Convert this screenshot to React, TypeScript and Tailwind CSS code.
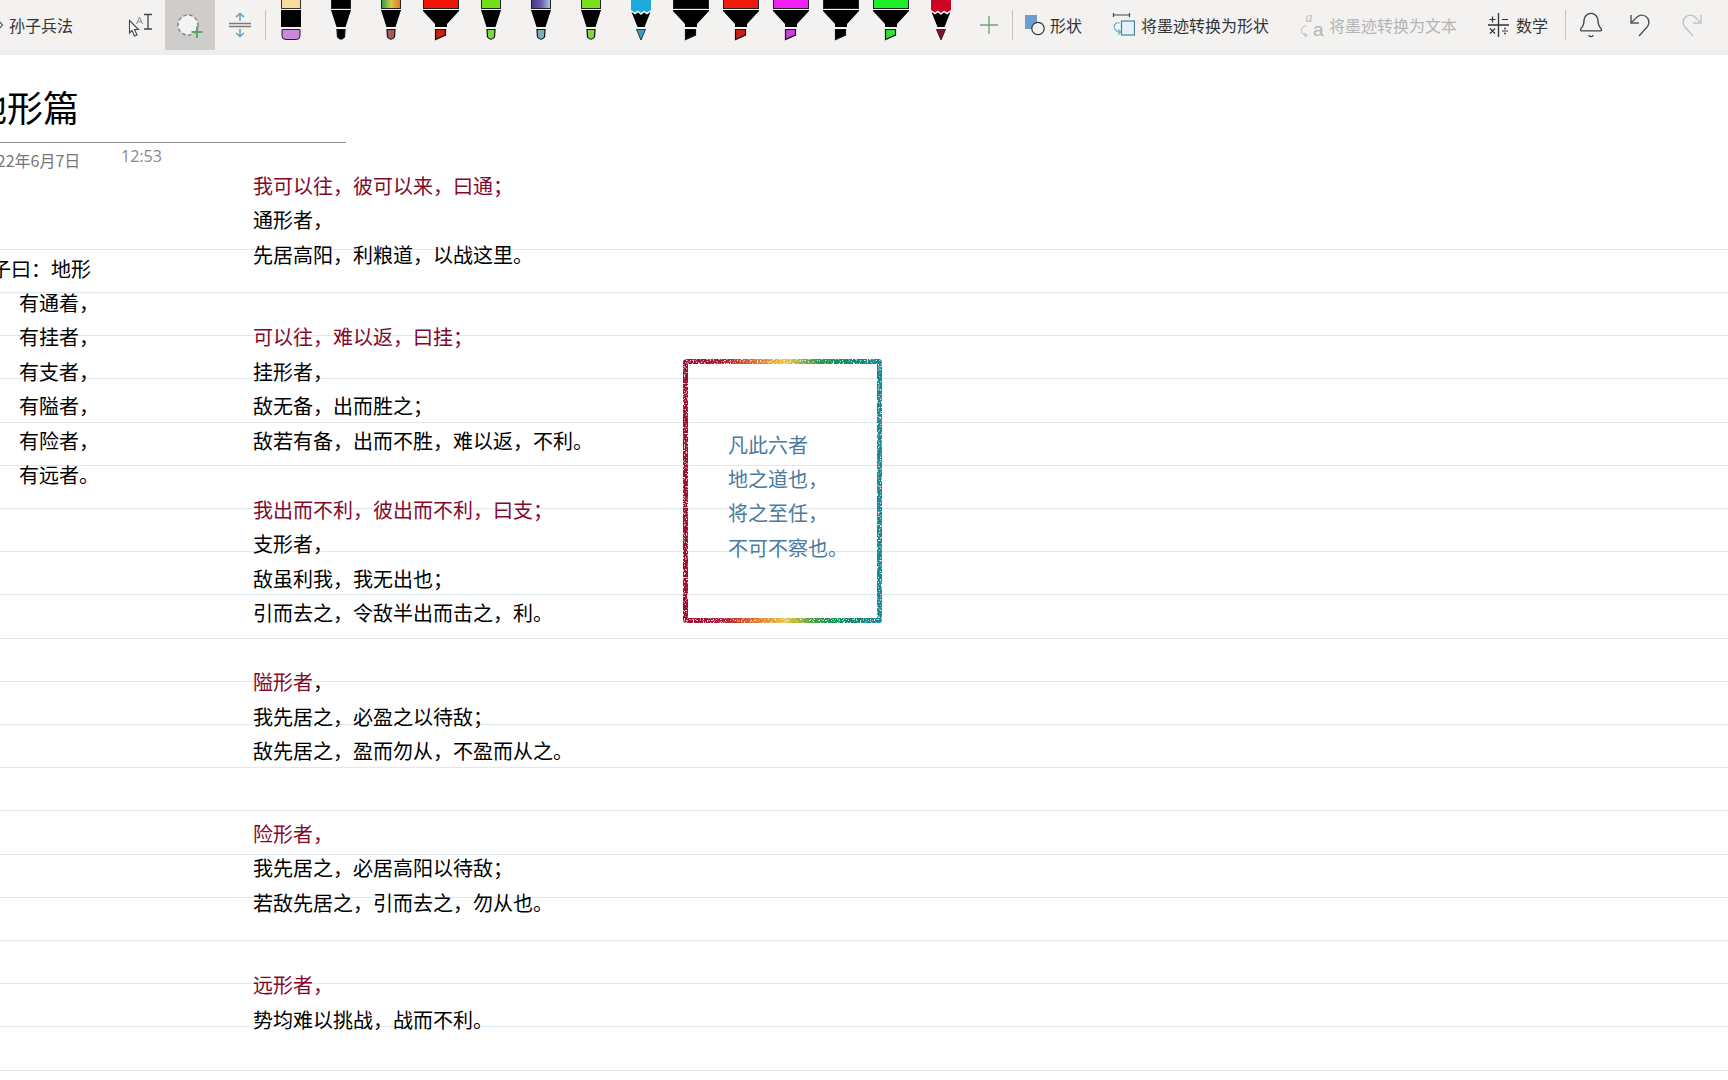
import { Bell } from "lucide-react";

type PenKind = "fine" | "chisel" | "pencil";

interface IPen {
  kind: PenKind;
  body: string;
  tip: string;
  edge?: string;
}

const pens: IPen[] = [
  { kind: "fine", body: "#000", tip: "#000" },
  { kind: "fine", body: "url(#rainbowPen)", tip: "#a45a5a" },
  { kind: "chisel", body: "#f01408", tip: "#c8200f" },
  { kind: "fine", body: "#6fe019", tip: "#7fd83a" },
  { kind: "fine", body: "url(#galaxyPen)", tip: "#7fb0ba" },
  { kind: "fine", body: "#7be01c", tip: "#86d24a" },
  { kind: "pencil", body: "#1caad9", tip: "#3a9cc0" },
  { kind: "chisel", body: "#000", tip: "#000" },
  { kind: "chisel", body: "#ee1a0c", tip: "#cc2018" },
  { kind: "chisel", body: "#f020f4", tip: "#cc40dc" },
  { kind: "chisel", body: "#000", tip: "#000" },
  { kind: "chisel", body: "#20ee28", tip: "#30e038" },
  { kind: "pencil", body: "#cc0426", tip: "#8a0a30" },
];

function Pen({ kind, body, tip }: IPen) {
  return (
    <svg viewBox="0 0 50 50" className="w-[50px] h-[50px] shrink-0">
      {kind === "fine" && (
        <>
          <rect x="15.5" y="-2" width="19" height="10.5" fill={body} stroke="#222" />
          <path d="M15 10 H35 L29.5 27 H20.5 Z" fill="#000" />
          <path d="M21 29.5 H29 L28.5 37 Q25 41.5 21.5 37 Z" fill={tip} stroke="#111" strokeWidth="1.2" />
        </>
      )}
      {kind === "chisel" && (
        <>
          <rect x="7.5" y="-2" width="35" height="10.5" fill={body} stroke="#222" />
          <path d="M7 10 H43 V11 L31 24 V27 H19 V24 L7 11 Z" fill="#000" />
          <path d="M19.5 29.5 H29.5 V35 L19.5 39.5 Z" fill={tip} stroke="#111" strokeWidth="1.2" />
        </>
      )}
      {kind === "pencil" && (
        <>
          <path d="M15 -2 H35 V10 L31 12.5 L28 10.5 L25 13 L22 10.5 L19 12.5 L15 10 Z" fill={body} />
          <path d="M15.5 12 L19 14.5 L22 12.5 L25 15 L28 12.5 L31 14.5 L34.5 12 L28.5 27 H21.5 Z" fill="#000" />
          <path d="M20.5 29.5 H29.5 L25 40 Z" fill={tip} stroke="#111" strokeWidth="0.8" />
        </>
      )}
    </svg>
  );
}

function EraserPen() {
  return (
    <svg viewBox="0 0 50 50" className="w-[50px] h-[50px] shrink-0">
      <rect x="15.5" y="-2" width="19" height="10.5" fill="#f8dc9c" stroke="#333" />
      <rect x="15" y="10" width="20" height="17" fill="#000" />
      <path d="M16 29.5 H34 V36 Q34 39.5 30 39.5 H20 Q16 39.5 16 36 Z" fill="#c98ada" stroke="#222" />
    </svg>
  );
}

function Separator() {
  return <div className="w-px h-[30px] bg-[#c4c2c0] shrink-0" />;
}

function SelectIcon() {
  return (
    <svg viewBox="0 0 37 50" className="w-[37px] h-[50px]" fill="none">
      <path d="M1.5 20.5 L10.5 29.5 H6.5 L9 35 L6.5 36 L4 30.5 L1.5 33 Z" stroke="#444" strokeWidth="1.1" fill="#fff" />
      <path d="M8.5 24 L11.5 17 L14.5 24 M9.7 21.8 H13.3" stroke="#888" strokeWidth="1" />
      <path d="M16 14.5 H24 M16 29 H24 M20 14.5 V29" stroke="#444" strokeWidth="1.3" />
    </svg>
  );
}

function LassoIcon() {
  return (
    <svg viewBox="0 0 50 50" className="w-[50px] h-[50px]" fill="none">
      <circle cx="23" cy="25" r="10" fill="#f4f4f4" stroke="#808080" strokeWidth="1.4" strokeDasharray="3.5 2.5" />
      <path d="M32 26.5 V38 M26.5 32 H37.5" stroke="#5aa868" strokeWidth="2" />
    </svg>
  );
}

function InsertSpaceIcon() {
  return (
    <svg viewBox="0 0 50 50" className="w-[50px] h-[50px]" fill="none">
      <path d="M14 23.5 H36 M14 26.5 H36" stroke="#7c7c7c" strokeWidth="1.3" />
      <path d="M25 21 V13.5 M21 17 L25 13.5 L29 17 M25 29 V36.5 M21 33 L25 36.5 L29 33" stroke="#5f9fc4" strokeWidth="1.5" />
    </svg>
  );
}

function ShapeIcon() {
  return (
    <svg viewBox="0 0 20 24" className="w-5 h-6 shrink-0" fill="none">
      <rect x="0" y="2" width="12" height="14" fill="#6b9fd0" />
      <circle cx="13" cy="15.5" r="6.2" fill="#f3f2f1" stroke="#333" strokeWidth="1.2" />
    </svg>
  );
}

function ToShapeIcon() {
  return (
    <svg viewBox="0 0 23 26" className="w-[23px] h-[26px] shrink-0" fill="none">
      <path d="M1.5 1 V5 M17.5 1 V5 M1.5 3 H17.5" stroke="#444" strokeWidth="1.2" />
      <rect x="9.5" y="9" width="13" height="14" fill="#e4f2f8" stroke="#4c7f94" strokeWidth="1.2" />
      <path d="M8 11 H4 Q1 14 3 17 Q5 21 9 20 M6 17.5 L9 20 L6 22.5" stroke="#6bb0d0" strokeWidth="1.2" />
    </svg>
  );
}

function ToTextIcon() {
  return (
    <svg viewBox="0 0 23 28" className="w-[23px] h-7 shrink-0 overflow-visible" fill="none">
      <text x="5.5" y="11" fontSize="14" fontStyle="italic" fontFamily="Liberation Serif, serif" fill="#c0c0c0">a</text>
      <path d="M6 14 Q0.5 17 1.5 21 Q2.5 24 7 24 M4.5 22 L7 24 L4.5 26" stroke="#c8c8c8" strokeWidth="1.1" />
      <text x="13" y="25" fontSize="19" fontFamily="Liberation Sans, sans-serif" fill="#b4b4b4">a</text>
    </svg>
  );
}

function MathIcon() {
  return (
    <svg viewBox="0 0 23 26" className="w-[23px] h-[26px] shrink-0" fill="none">
      <path d="M11.5 1 V25 M1 13 H22" stroke="#333" strokeWidth="1.3" />
      <path d="M2.5 7.5 H8.5 M5.5 4.5 V10.5 M15 7.5 H21" stroke="#333" strokeWidth="1.2" />
      <path d="M3 16.5 L8 21.5 M8 16.5 L3 21.5 M15 19 H21" stroke="#333" strokeWidth="1.2" />
      <circle cx="18" cy="16.5" r="0.9" fill="#333" />
      <circle cx="18" cy="21.5" r="0.9" fill="#333" />
    </svg>
  );
}

function UndoIcon({ redo }: { redo?: boolean }) {
  return (
    <svg
      viewBox="0 0 24 26"
      className={`w-6 h-[26px] ${redo ? "-scale-x-100" : ""}`}
      fill="none"
      stroke={redo ? "#c2c2c2" : "#555"}
      strokeWidth="1.4"
    >
      <path d="M2 3 V11 H10" />
      <path d="M2 11 L8 5 Q12 1.5 17 4.5 Q22 9 18.5 14.5 L10 24" />
    </svg>
  );
}

function Toolbar() {
  return (
    <header className="h-[55px] shrink-0 bg-[#efeeed]">
      <div className="flex items-center h-[50px] bg-[#f3f2f1] text-base text-[#333] whitespace-nowrap">
        <div className="flex items-center w-[128px] shrink-0">
          <svg viewBox="0 0 9 12" className="w-[9px] h-3" fill="none">
            <path d="M-1 2 L2.5 6 L-1 10" stroke="#555" strokeWidth="1.2" />
          </svg>
          <span>孙子兵法</span>
        </div>
        <SelectIcon />
        <div className="w-[50px] h-[50px] bg-[#cfcdcb] shrink-0">
          <LassoIcon />
        </div>
        <InsertSpaceIcon />
        <Separator />
        <EraserPen />
        {pens.map((pen, i) => (
          <Pen key={i} {...pen} />
        ))}
        <div className="flex items-center justify-center w-[46px] h-[50px] shrink-0">
          <svg viewBox="0 0 20 20" className="w-5 h-5" fill="none">
            <path d="M10 1 V19 M1 10 H19" stroke="#6fa87a" strokeWidth="1.4" />
          </svg>
        </div>
        <Separator />
        <div className="flex items-center gap-[5px] ml-3">
          <ShapeIcon />
          <span>形状</span>
        </div>
        <div className="flex items-center gap-1.5 ml-[30px]">
          <ToShapeIcon />
          <span>将墨迹转换为形状</span>
        </div>
        <div className="flex items-center gap-1.5 ml-[31px] text-[#b4b4b4]">
          <ToTextIcon />
          <span>将墨迹转换为文本</span>
        </div>
        <div className="flex items-center gap-1.5 ml-[30px]">
          <MathIcon />
          <span>数学</span>
        </div>
        <div className="ml-[17px]">
          <Separator />
        </div>
        <div className="flex items-center justify-center w-[50px] h-[50px]">
          <Bell size={28} strokeWidth={1.2} color="#444" />
        </div>
        <div className="flex items-center justify-center w-[50px] h-[50px]">
          <UndoIcon />
        </div>
        <div className="flex items-center justify-center w-[50px] h-[50px]">
          <UndoIcon redo />
        </div>
      </div>
    </header>
  );
}

function InkBorder() {
  return (
    <svg viewBox="0 0 199 264" className="absolute inset-0 w-[199px] h-[264px]" fill="none">
      <defs>
        <linearGradient id="rainbowInk" gradientUnits="userSpaceOnUse" x1="0" y1="0" x2="199" y2="0">
          <stop offset="0" stopColor="#a00833" />
          <stop offset="0.2" stopColor="#b01838" />
          <stop offset="0.35" stopColor="#d8702c" />
          <stop offset="0.52" stopColor="#ecc838" />
          <stop offset="0.68" stopColor="#2a9c48" />
          <stop offset="0.85" stopColor="#0a8a6c" />
          <stop offset="1" stopColor="#188a98" />
        </linearGradient>
        <filter id="glitter" x="-5%" y="-5%" width="110%" height="110%">
          <feTurbulence type="fractalNoise" baseFrequency="0.7" numOctaves="2" seed="4" result="noise" />
          <feColorMatrix
            in="noise"
            type="matrix"
            values="0 0 0 0 1  0 0 0 0 1  0 0 0 0 1  0 0 0 5 -2.85"
            result="specks"
          />
          <feComposite in="specks" in2="SourceGraphic" operator="in" result="clipped" />
          <feMerge>
            <feMergeNode in="SourceGraphic" />
            <feMergeNode in="clipped" />
          </feMerge>
        </filter>
      </defs>
      <rect
        x="2.5"
        y="2.5"
        width="194"
        height="259"
        rx="1"
        stroke="url(#rainbowInk)"
        strokeWidth="5"
        filter="url(#glitter)"
      />
    </svg>
  );
}

function Line({ children, red }: { children: string; red?: boolean }) {
  return <p className={red ? "text-[#82082a]" : undefined}>{children}</p>;
}

export default function App() {
  return (
    <div className="flex flex-col w-[1728px] h-[1080px] overflow-hidden bg-white text-black font-['Noto_Sans_CJK_SC','Noto_Sans',sans-serif]">
      <svg width="0" height="0" className="absolute">
        <defs>
          <linearGradient id="rainbowPen" x1="0" y1="0" x2="1" y2="0">
            <stop offset="0" stopColor="#2a9a50" />
            <stop offset="0.5" stopColor="#d8c840" />
            <stop offset="1" stopColor="#e0762c" />
          </linearGradient>
          <linearGradient id="galaxyPen" x1="0" y1="0" x2="1" y2="0">
            <stop offset="0" stopColor="#3c3a8c" />
            <stop offset="0.5" stopColor="#6a5aa8" />
            <stop offset="1" stopColor="#a8d0dc" />
          </linearGradient>
        </defs>
      </svg>
      <Toolbar />
      <main className="flex flex-1 items-start min-h-0 bg-[linear-gradient(#fff_190px,transparent_190px),repeating-linear-gradient(to_bottom,transparent_0,transparent_21px,#dde9ee_21px,#dde9ee_22px,transparent_22px,transparent_43.2px)]">
        <section className="-ml-[29px] w-[282px] shrink-0 pt-7">
          <div className="w-[375px] h-[60px] border-b border-[#909090]">
            <h1 className="text-[36px] leading-[46px]">地形篇</h1>
          </div>
          <div className="flex items-start text-[#777]">
            <span className="w-[150px] pl-2 mt-[5px] text-base leading-6">2022年6月7日</span>
            <span className="mt-px text-base leading-6 text-[#888] font-['Open_Sans',sans-serif]">12:53</span>
          </div>
          <div className="mt-[79.6px] text-[20px] leading-[34.4px]">
            <p>孙子曰：地形</p>
            <div className="pl-12">
              <p>有通着，</p>
              <p>有挂者，</p>
              <p>有支者，</p>
              <p>有隘者，</p>
              <p>有险者，</p>
              <p>有远者。</p>
            </div>
          </div>
        </section>

        <section className="w-[430px] shrink-0 mt-[113.5px] text-[20px] leading-[34.5px]">
          <div>
            <Line red>我可以往，彼可以来，曰通；</Line>
            <Line>通形者，</Line>
            <Line>先居高阳，利粮道，以战这里。</Line>
          </div>
          <div className="mt-12">
            <Line red>可以往，难以返，曰挂；</Line>
            <Line>挂形者，</Line>
            <Line>敌无备，出而胜之；</Line>
            <Line>敌若有备，出而不胜，难以返，不利。</Line>
          </div>
          <div className="mt-[34.5px]">
            <Line red>我出而不利，彼出而不利，曰支；</Line>
            <Line>支形者，</Line>
            <Line>敌虽利我，我无出也；</Line>
            <Line>引而去之，令敌半出而击之，利。</Line>
          </div>
          <div className="mt-[34.5px]">
            <p>
              <span className="text-[#82082a]">隘形者</span>，
            </p>
            <Line>我先居之，必盈之以待敌；</Line>
            <Line>敌先居之，盈而勿从，不盈而从之。</Line>
          </div>
          <div className="mt-12">
            <Line red>险形者，</Line>
            <Line>我先居之，必居高阳以待敌；</Line>
            <Line>若敌先居之，引而去之，勿从也。</Line>
          </div>
          <div className="mt-12">
            <Line red>远形者，</Line>
            <Line>势均难以挑战，战而不利。</Line>
          </div>
        </section>

        <section className="relative w-[199px] h-[264px] shrink-0 mt-[304px] pl-[45px] pt-[69px] text-[20px] leading-[34.2px] text-[#4a7a9e]">
          <InkBorder />
          <p>凡此六者</p>
          <p>地之道也，</p>
          <p>将之至任，</p>
          <p>不可不察也。</p>
        </section>
      </main>
    </div>
  );
}
